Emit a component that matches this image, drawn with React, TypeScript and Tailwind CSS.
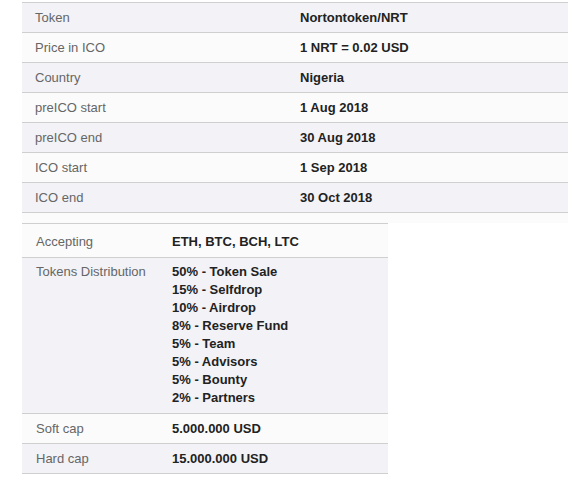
export default function App() {
  const top = [
    { label: "Token", value: "Nortontoken/NRT" },
    { label: "Price in ICO", value: "1 NRT = 0.02 USD" },
    { label: "Country", value: "Nigeria" },
    { label: "preICO start", value: "1 Aug 2018" },
    { label: "preICO end", value: "30 Aug 2018" },
    { label: "ICO start", value: "1 Sep 2018" },
    { label: "ICO end", value: "30 Oct 2018" },
  ];

  const distribution = [
    "50% - Token Sale",
    "15% - Selfdrop",
    "10% - Airdrop",
    "8% - Reserve Fund",
    "5% - Team",
    "5% - Advisors",
    "5% - Bounty",
    "2% - Partners",
  ];

  return (
    <div className="min-h-[485px] bg-white pl-[22px] pt-[2px] font-['Liberation_Sans',Arial,sans-serif] text-[13px]">
      {/* ICO details */}
      <div className="w-[546px]">
        {top.map((row, i) => (
          <div
            key={row.label}
            className={`flex h-[30px] items-center border-t border-[#cfcfcf] ${
              i % 2 === 0 ? "bg-[#f2f2f7]" : "bg-[#fbfbfb]"
            }`}
          >
            <div className="w-[278px] pl-[13px] text-[#666]">{row.label}</div>
            <div className="font-bold text-[#222]">{row.value}</div>
          </div>
        ))}
        <div className="h-[11px] border-t border-[#cfcfcf] bg-[#fbfbfb]" />
      </div>

      {/* Sale details */}
      <div className="w-[366px] border-b border-[#cfcfcf]">
        <div className="flex h-[34px] items-center border-t border-[#cfcfcf] bg-[#fbfbfb] pt-[2px]">
          <div className="w-[150px] pl-[14px] text-[#666]">Accepting</div>
          <div className="font-bold text-[#222]">ETH, BTC, BCH, LTC</div>
        </div>
        <div className="flex h-[156px] border-t border-[#cfcfcf] bg-[#f2f2f7] pt-[5px] leading-[18px]">
          <div className="w-[150px] pl-[14px] text-[#666]">Tokens Distribution</div>
          <div className="flex flex-col font-bold text-[#222]">
            {distribution.map((d) => (
              <span key={d}>{d}</span>
            ))}
          </div>
        </div>
        <div className="flex h-[30px] items-center border-t border-[#cfcfcf] bg-[#fbfbfb]">
          <div className="w-[150px] pl-[14px] text-[#666]">Soft cap</div>
          <div className="font-bold text-[#222]">5.000.000 USD</div>
        </div>
        <div className="flex h-[30px] items-center border-t border-[#cfcfcf] bg-[#f2f2f7]">
          <div className="w-[150px] pl-[14px] text-[#666]">Hard cap</div>
          <div className="font-bold text-[#222]">15.000.000 USD</div>
        </div>
      </div>
    </div>
  );
}
